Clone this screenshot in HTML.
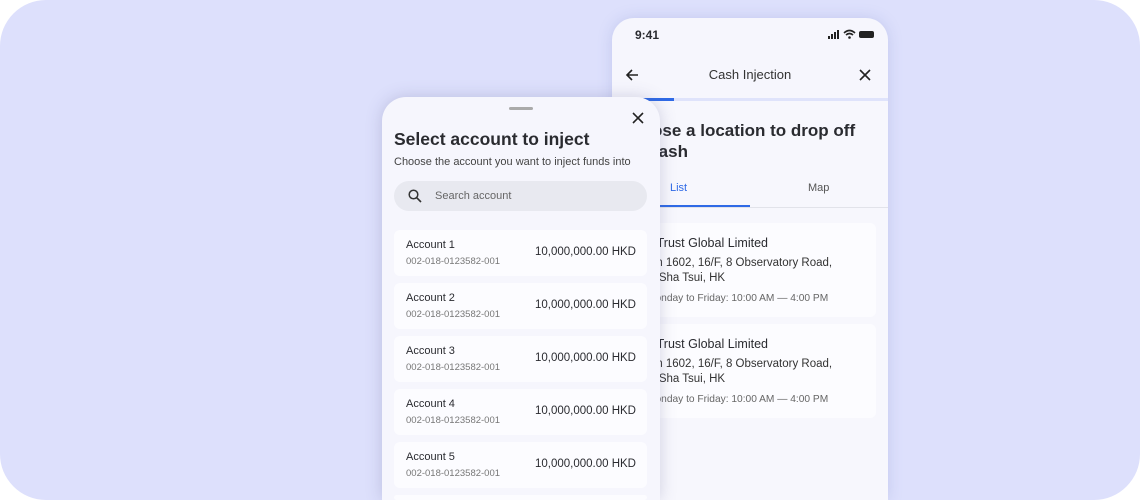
<!DOCTYPE html>
<html><head><style>
*{margin:0;padding:0;box-sizing:border-box}
html,body{width:1140px;height:500px;overflow:hidden}
body{background:#fff;font-family:"Liberation Sans",sans-serif;position:relative}
.bg{position:absolute;inset:0;background:#dde0fc;border-radius:46px;overflow:hidden}
.phone{position:absolute;left:612px;top:18px;width:276px;height:482px;background:#f6f6fd;border-radius:22px 22px 0 0;box-shadow:0 0 14px rgba(120,130,200,.25);overflow:hidden}
.sheet{position:absolute;left:382px;top:97px;width:278px;height:403px;background:#f6f6fd;border-radius:24px 24px 0 0;box-shadow:0 0 16px rgba(90,90,140,.25);overflow:hidden}
.t{position:absolute;white-space:nowrap;color:#2a2b30}
.card{position:absolute;left:12px;width:253px;height:46px;background:#fcfcff;border-radius:6px}
.rc{position:absolute;left:20px;width:244px;height:94px;background:#fcfcff;border-radius:6px}
</style></head><body>
<div class="bg">
<div class="phone">
 <div class="t" style="left:23px;top:10px;font-size:12px;font-weight:bold">9:41</div>
 <svg style="position:absolute;left:215px;top:11px" width="50" height="11"><rect x="1" y="7" width="2" height="3" fill="#222"/><rect x="4" y="5" width="2" height="5" fill="#222"/><rect x="7" y="3" width="2" height="7" fill="#222"/><rect x="10" y="1" width="2" height="9" fill="#222"/><path d="M17 4 Q22.5 -1 28 4 M19 6 Q22.5 3 26 6" stroke="#222" stroke-width="1.6" fill="none"/><circle cx="22.5" cy="8.5" r="1.3" fill="#222"/><rect x="32" y="2" width="15" height="7" rx="2" fill="#222"/></svg>
 <svg style="position:absolute;left:13px;top:50px" width="14" height="14"><path d="M13 7H2M7 2 2 7l5 5" stroke="#222" stroke-width="1.6" fill="none"/></svg>
 <div class="t" style="left:0;width:276px;text-align:center;top:49px;font-size:13px;color:#333">Cash Injection</div>
 <svg style="position:absolute;left:247px;top:51px" width="12" height="12"><path d="M1 1 11 11M11 1 1 11" stroke="#222" stroke-width="1.6"/></svg>
 <div style="position:absolute;left:0;top:80px;width:276px;height:3px;background:#dfe3fb"></div>
 <div style="position:absolute;left:0;top:80px;width:62px;height:3px;background:#2f6ae6"></div>
 <div style="position:absolute;left:0;top:83px;width:276px;height:420px;background:#f7f7fd"></div>
 <div class="t" style="left:7px;top:102px;font-size:17px;font-weight:bold;line-height:21px">Choose a location to drop off<br>the cash</div>
 <div class="t" style="left:58px;top:164px;font-size:11px;color:#2f6ae6">List</div>
 <div class="t" style="left:196px;top:164px;font-size:11px;color:#555">Map</div>
 <div style="position:absolute;left:0;top:189px;width:276px;height:1px;background:#e2e3ea"></div>
 <div style="position:absolute;left:0;top:187px;width:138px;height:2px;background:#2f6ae6"></div>
 <div class="rc" style="top:205px"></div>
 <div class="t" style="left:24px;top:218px;font-size:12.5px">SC Trust Global Limited</div>
 <div class="t" style="left:20px;top:238px;font-size:11.5px;line-height:15px;color:#333">Room 1602, 16/F, 8 Observatory Road,<br>Tsim Sha Tsui, HK</div>
 <div class="t" style="left:35px;top:275px;font-size:10.2px;color:#666">Monday to Friday: 10:00 AM — 4:00 PM</div>
 <div class="rc" style="top:306px"></div>
 <div class="t" style="left:24px;top:319px;font-size:12.5px">SC Trust Global Limited</div>
 <div class="t" style="left:20px;top:339px;font-size:11.5px;line-height:15px;color:#333">Room 1602, 16/F, 8 Observatory Road,<br>Tsim Sha Tsui, HK</div>
 <div class="t" style="left:35px;top:376px;font-size:10.2px;color:#666">Monday to Friday: 10:00 AM — 4:00 PM</div>
</div>
<div class="sheet">
 <div style="position:absolute;left:127px;top:10px;width:24px;height:3px;border-radius:2px;background:#aaa"></div>
 <svg style="position:absolute;left:250px;top:15px" width="12" height="12"><path d="M1 1 11 11M11 1 1 11" stroke="#222" stroke-width="1.6"/></svg>
 <div class="t" style="left:12px;top:32px;font-size:17.5px;font-weight:bold">Select account to inject</div>
 <div class="t" style="left:12px;top:59px;font-size:11px;color:#444">Choose the account you want to inject funds into</div>
 <div style="position:absolute;left:12px;top:84px;width:253px;height:30px;border-radius:15px;background:#e8e9f0"></div>
 <svg style="position:absolute;left:26px;top:92px" width="14" height="14"><circle cx="5.5" cy="5.5" r="4.3" stroke="#333" stroke-width="1.5" fill="none"/><path d="M8.7 8.7 13 13" stroke="#333" stroke-width="1.6"/></svg>
 <div class="t" style="left:53px;top:93px;font-size:11px;color:#666">Search account</div>
 <div class="card" style="top:133px"></div><div class="t" style="left:24px;top:142px;font-size:11px">Account 1</div><div class="t" style="left:24px;top:159px;font-size:9.5px;color:#777">002-018-0123582-001</div><div class="t" style="right:24px;top:149px;font-size:11.5px">10,000,000.00 HKD</div>
 <div class="card" style="top:186px"></div><div class="t" style="left:24px;top:195px;font-size:11px">Account 2</div><div class="t" style="left:24px;top:212px;font-size:9.5px;color:#777">002-018-0123582-001</div><div class="t" style="right:24px;top:202px;font-size:11.5px">10,000,000.00 HKD</div>
 <div class="card" style="top:239px"></div><div class="t" style="left:24px;top:248px;font-size:11px">Account 3</div><div class="t" style="left:24px;top:265px;font-size:9.5px;color:#777">002-018-0123582-001</div><div class="t" style="right:24px;top:255px;font-size:11.5px">10,000,000.00 HKD</div>
 <div class="card" style="top:292px"></div><div class="t" style="left:24px;top:301px;font-size:11px">Account 4</div><div class="t" style="left:24px;top:318px;font-size:9.5px;color:#777">002-018-0123582-001</div><div class="t" style="right:24px;top:308px;font-size:11.5px">10,000,000.00 HKD</div>
 <div class="card" style="top:345px"></div><div class="t" style="left:24px;top:354px;font-size:11px">Account 5</div><div class="t" style="left:24px;top:371px;font-size:9.5px;color:#777">002-018-0123582-001</div><div class="t" style="right:24px;top:361px;font-size:11.5px">10,000,000.00 HKD</div>
 <div class="card" style="top:398px;height:5px"></div>
</div>
</div>
</body></html>
